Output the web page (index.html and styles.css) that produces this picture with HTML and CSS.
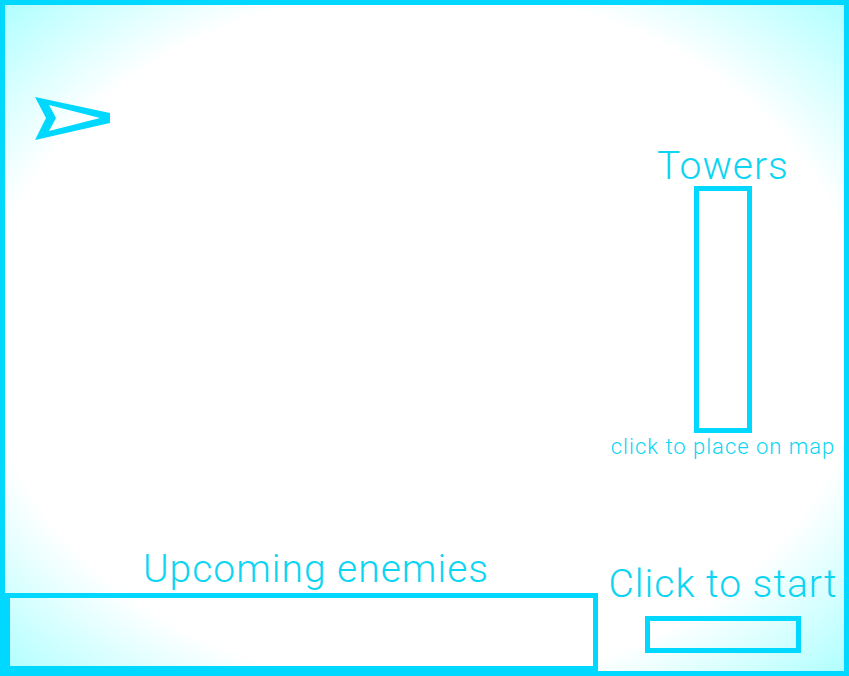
FILE: index.html
```html
<!DOCTYPE html>
<html>
<head>
<meta charset="utf-8">
<link rel="stylesheet" href="styles.css">
</head>
<body>
<div class="frame">
  <svg class="ship" width="130" height="160" viewBox="0 0 130 160">
    <path fill="#00d8ff" fill-rule="evenodd" d="M35,97 L110,113 L110,123 L35,140 L46,118 Z M49,105 L100,118 L49,131 L56,118 Z"/>
  </svg>
  <div class="main">
    <div class="title upcoming">Upcoming enemies</div>
    <div class="enemies"></div>
  </div>
  <div class="side">
    <div class="title">Towers</div>
    <div class="towers"></div>
    <div class="hint">click to place on map</div>
    <div class="title start-title">Click to start</div>
    <div class="start"></div>
  </div>
</div>
</body>
</html>
```

FILE: styles.css
```css
html, body {
  margin: 0;
  padding: 0;
  background: #fff;
}
.frame {
  position: relative;
  width: 849px;
  height: 676px;
  box-sizing: border-box;
  border: 5px solid #00d8ff;
  display: flex;
  background: radial-gradient(ellipse farthest-corner at center, #fff 0%, #fff 74%, #b0ffff 100%);
  font-family: Roboto, "Liberation Sans", sans-serif;
  font-weight: 300;
  color: #0cd5f2;
  overflow: hidden;
}
.ship {
  position: absolute;
  left: -5px;
  top: -5px;
}
.main {
  width: 593px;
  display: flex;
  flex-direction: column;
  justify-content: flex-end;
}
.title {
  font-size: 39px;
  line-height: 39px;
  letter-spacing: 1px;
  white-space: nowrap;
}
.upcoming {
  text-align: center;
  padding-left: 29px;
  margin-bottom: 4px;
}
.enemies {
  height: 78px;
  box-sizing: border-box;
  border: 5px solid #00d8ff;
}
.side {
  flex: 1;
  display: flex;
  flex-direction: column;
  align-items: center;
  padding-top: 142px;
  padding-left: 4px;
}
.towers {
  width: 58px;
  height: 247px;
  box-sizing: border-box;
  border: 5px solid #00d8ff;
}
.hint {
  font-size: 22px;
  line-height: 22px;
  letter-spacing: 1px;
  margin-top: 3px;
  white-space: nowrap;
}
.start-title {
  margin-top: 107px;
}
.start {
  width: 156px;
  height: 37px;
  box-sizing: border-box;
  border: 5px solid #00d8ff;
  margin-top: 12px;
}
```
